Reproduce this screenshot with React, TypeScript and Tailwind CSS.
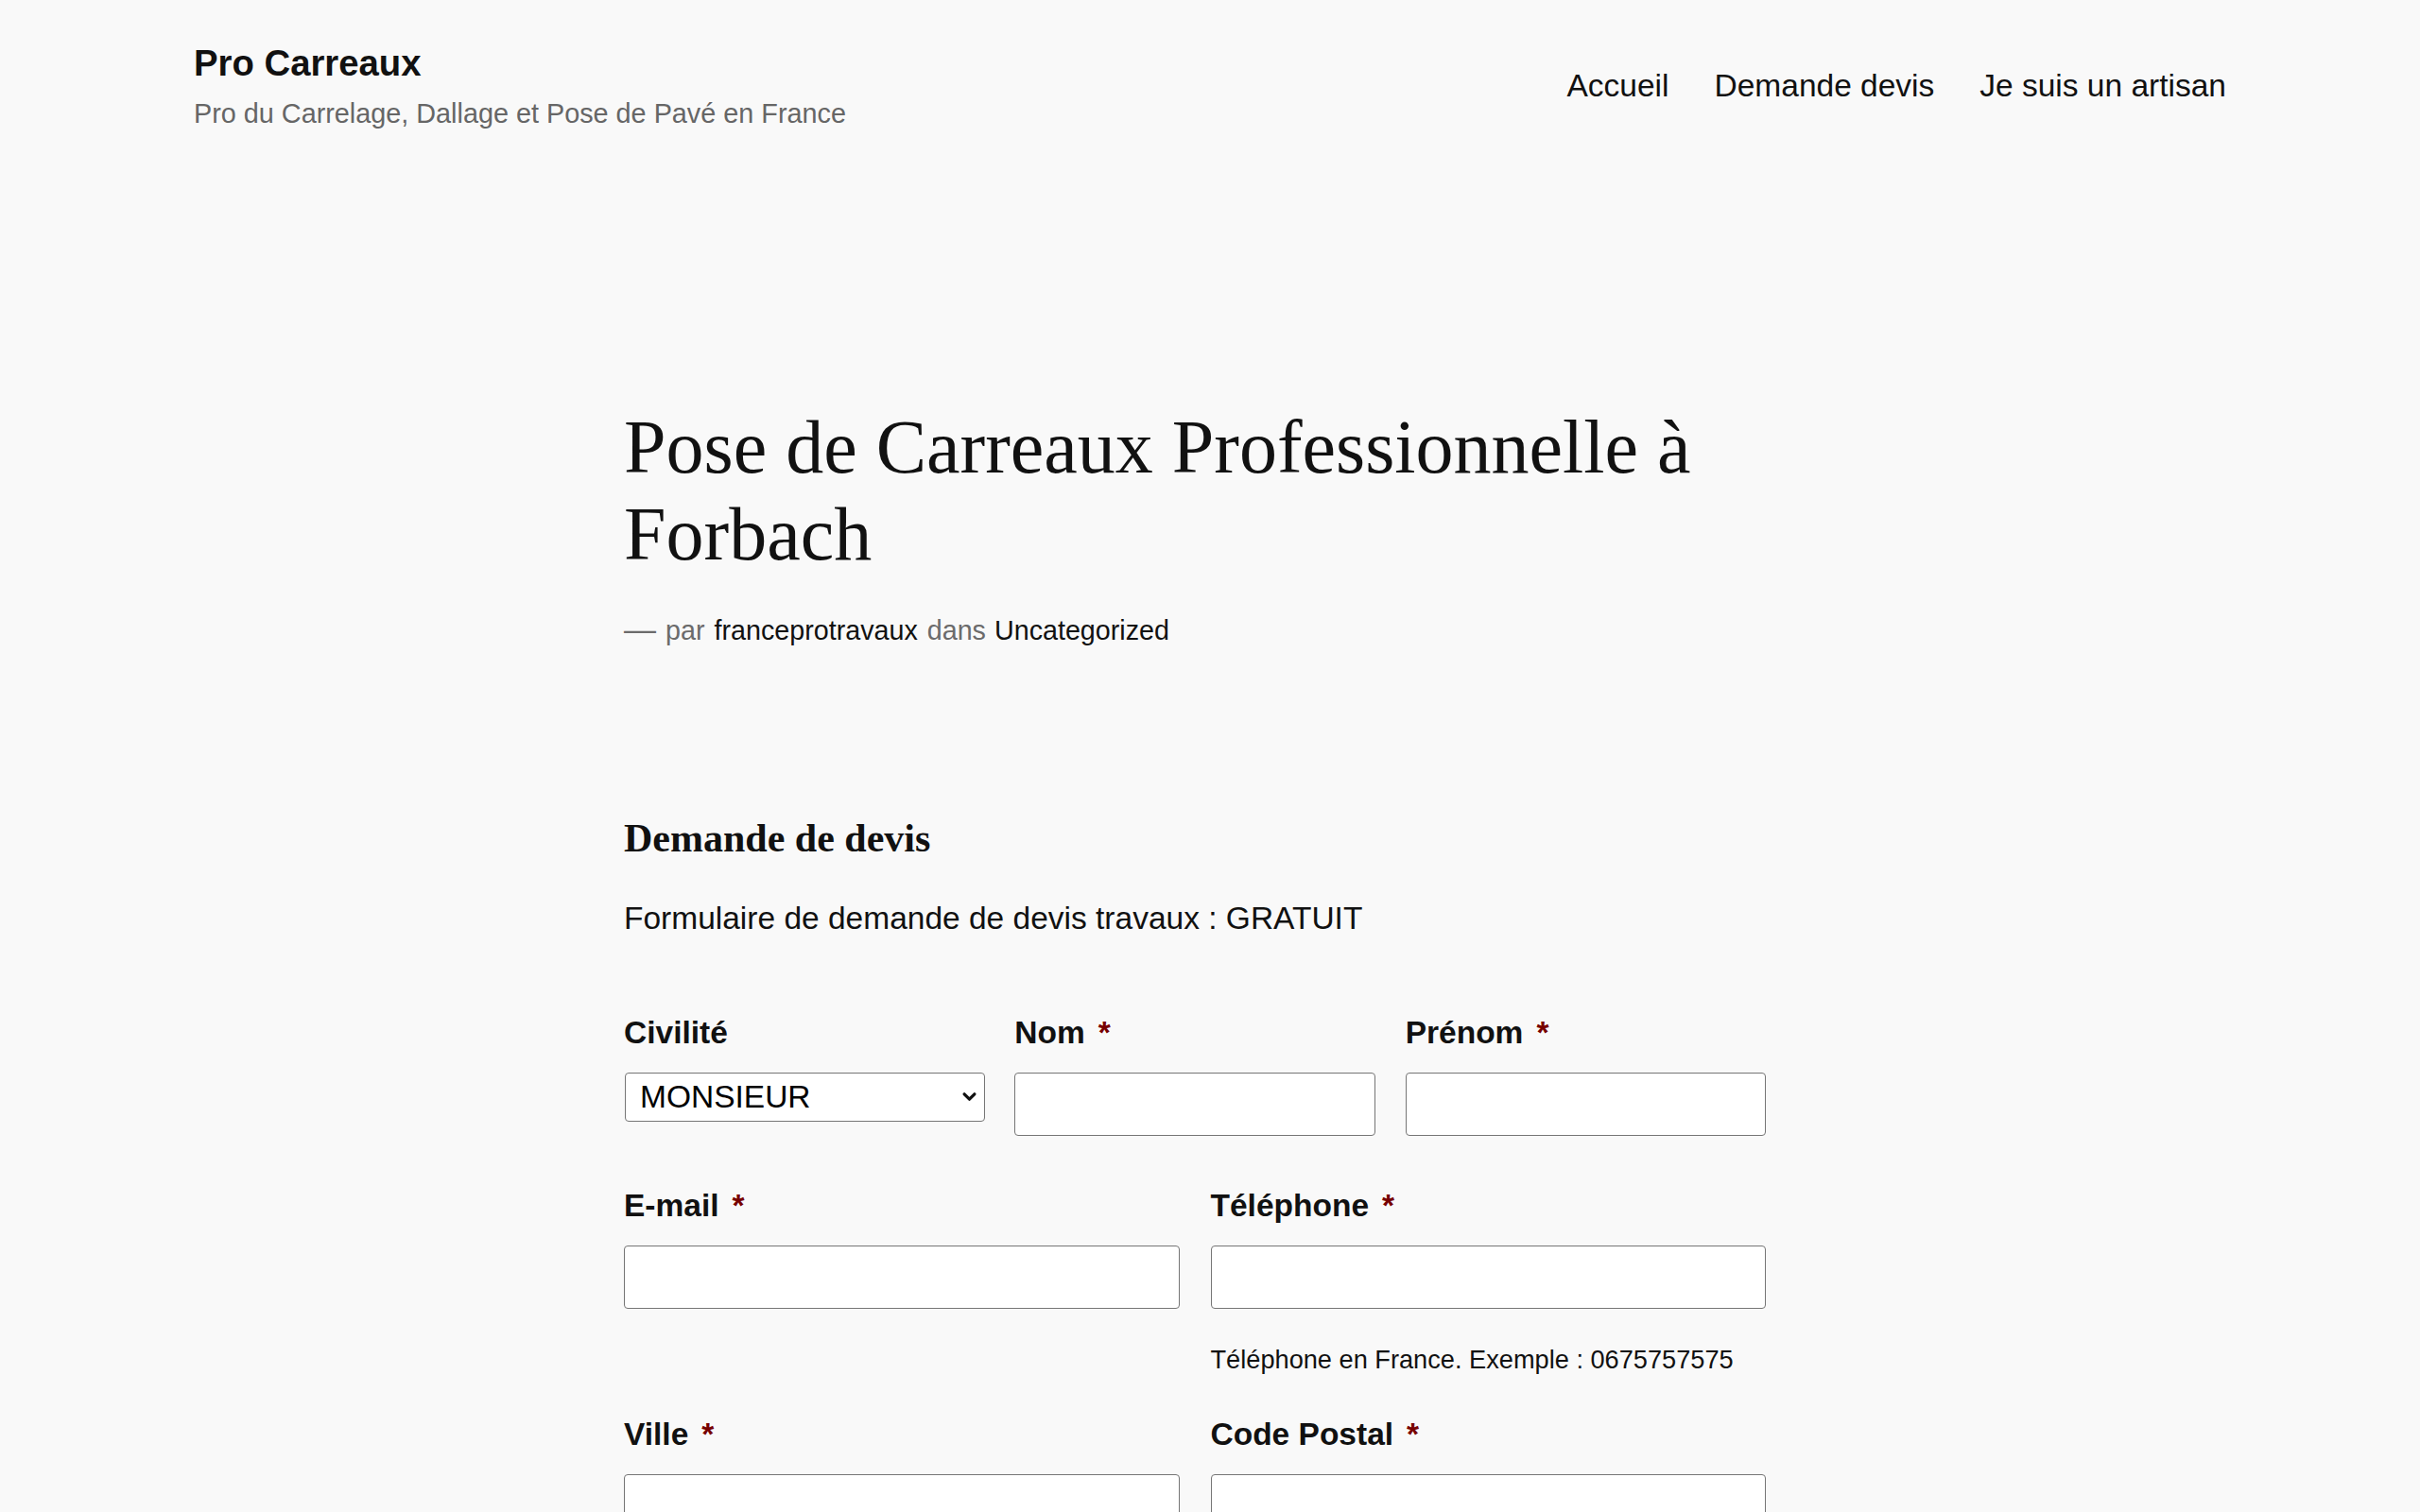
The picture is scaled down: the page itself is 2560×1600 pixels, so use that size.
const sans = { fontFamily: '"Liberation Sans", Arial, sans-serif' };

function Req() {
  return <span className="ml-[14px] text-[#700]">*</span>;
}

function Field({ label, required }: { label: string; required?: boolean }) {
  return (
    <div className="flex flex-col">
      <label className="mb-[22px] text-[33.5px] leading-[40px] font-bold text-[#111]">
        {label}
        {required && <Req />}
      </label>
      <input
        type="text"
        className="h-[67px] w-full rounded-[4px] border border-[#767676] bg-white"
      />
    </div>
  );
}

export default function App() {
  return (
    <div className="min-h-[1600px] bg-[#f9f9f9] text-[#111]" style={sans}>
      {/* Header */}
      <header className="flex items-center justify-between px-[205px] pt-[44px]">
        <div>
          <div className="text-[38.3px] leading-[46px] font-bold">Pro Carreaux</div>
          <div className="mt-[13px] text-[28.8px] leading-[34px] text-[#666]">
            Pro du Carrelage, Dallage et Pose de Pavé en France
          </div>
        </div>
        <nav className="flex gap-[48px] text-[33.5px] leading-[40px]">
          <a>Accueil</a>
          <a>Demande devis</a>
          <a>Je suis un artisan</a>
        </nav>
      </header>

      {/* Article */}
      <main className="mx-auto mt-[290px] w-[1240px]">
        <h1 className="font-['Liberation_Serif',serif] text-[80px] leading-[92px] font-normal">
          Pose de Carreaux Professionnelle à Forbach
        </h1>
        <div className="mt-[39px] h-[34px] flex items-baseline text-[28.7px] leading-[34px]">
          <span className="text-[#6b6b6b]">
            <span className="text-[34px] leading-[20px]">—</span>
            <span className="ml-[10px]">par</span>
          </span>
          <span className="ml-[10px]">franceprotravaux</span>
          <span className="ml-[10px] text-[#6b6b6b]">dans</span>
          <span className="ml-[9px]">Uncategorized</span>
        </div>

        <h2 className="mt-[178px] font-['Liberation_Serif',serif] text-[42px] leading-[50px] font-bold">
          Demande de devis
        </h2>
        <p className="mt-[40px] text-[33.5px] leading-[40px]">
          Formulaire de demande de devis travaux : GRATUIT
        </p>

        <form className="mt-[81px] w-[1208px]">
          <div className="grid grid-cols-3 gap-x-[32px]">
            <div className="flex flex-col">
              <label className="mb-[22px] text-[33.5px] leading-[40px] font-bold">Civilité</label>
              <div className="relative ml-[1px] w-[381px]">
                <select className="h-[52px] w-full appearance-none rounded-[4px] border border-[#767676] bg-white pl-[15px] text-[33.5px] text-black">
                  <option>MONSIEUR</option>
                  <option>MADAME</option>
                </select>
                <svg
                  viewBox="0 0 14 10"
                  className="pointer-events-none absolute right-[9px] top-[20px] h-[11px] w-[15px]"
                  fill="none"
                  stroke="#111"
                  strokeWidth="3"
                  strokeLinecap="round"
                  strokeLinejoin="round"
                >
                  <path d="M2 2.5 7 7.5 12 2.5" />
                </svg>
              </div>
            </div>
            <Field label="Nom" required />
            <Field label="Prénom" required />
          </div>

          <div className="mt-[54px] grid grid-cols-2 gap-x-[33px]">
            <Field label="E-mail" required />
            <div className="flex flex-col">
              <Field label="Téléphone" required />
              <div className="mt-[38px] text-[27.2px] leading-[32px]">
                Téléphone en France. Exemple : 0675757575
              </div>
            </div>
          </div>

          <div className="mt-[43px] grid grid-cols-2 gap-x-[33px]">
            <Field label="Ville" required />
            <Field label="Code Postal" required />
          </div>
        </form>
      </main>
    </div>
  );
}
